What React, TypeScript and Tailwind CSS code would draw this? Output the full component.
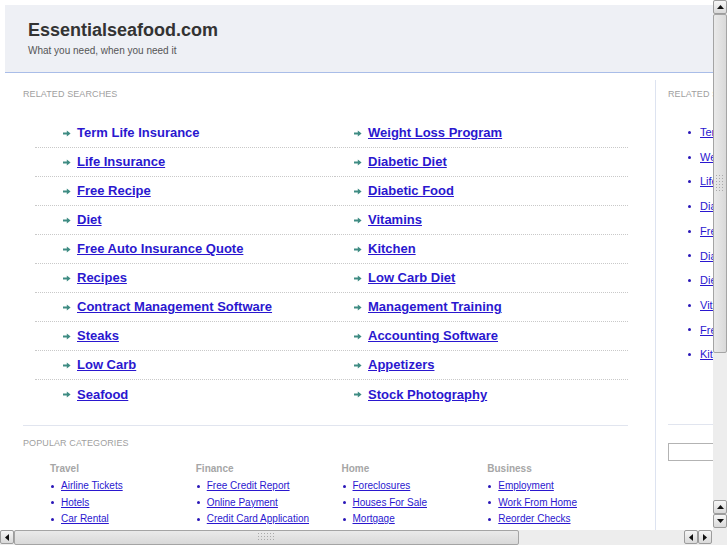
import React from 'react';

const leftKeywords = [
  'Term Life Insurance',
  'Life Insurance',
  'Free Recipe',
  'Diet',
  'Free Auto Insurance Quote',
  'Recipes',
  'Contract Management Software',
  'Steaks',
  'Low Carb',
  'Seafood',
];

const rightKeywords = [
  'Weight Loss Program',
  'Diabetic Diet',
  'Diabetic Food',
  'Vitamins',
  'Kitchen',
  'Low Carb Diet',
  'Management Training',
  'Accounting Software',
  'Appetizers',
  'Stock Photography',
];

const sideLinks = [
  'Term Life Insurance',
  'Weight Loss Program',
  'Life Insurance',
  'Diabetic Diet',
  'Free Recipe',
  'Diabetic Food',
  'Diet',
  'Vitamins',
  'Free Auto Insurance Quote',
  'Kitchen',
];

const categories = [
  { title: 'Travel', links: ['Airline Tickets', 'Hotels', 'Car Rental'] },
  { title: 'Finance', links: ['Free Credit Report', 'Online Payment', 'Credit Card Application'] },
  { title: 'Home', links: ['Foreclosures', 'Houses For Sale', 'Mortgage'] },
  { title: 'Business', links: ['Employment', 'Work From Home', 'Reorder Checks'] },
];

function Arrow() {
  return (
    <svg width="8" height="7" viewBox="0 0 8 7" className="shrink-0">
      <path d="M0 2.6H3.8V0.4L7.6 3.5L3.8 6.6V4.4H0Z" fill="#3f8c83" />
    </svg>
  );
}

function KeywordColumn({ items, className, pad }: { items: string[]; className: string; pad: string }) {
  return (
    <ul className={className}>
      {items.map((k, i) => (
        <li
          key={k}
          className={
            'h-[29px] flex items-center gap-[6px] border-b border-dotted border-[#c9c9c9] last:border-b-0 ' + pad
          }
        >
          <Arrow />
          <a
            href="#"
            className={
              'text-[13px] font-bold text-[#2a17cf] ' + (i === 0 && items === leftKeywords ? '' : 'underline')
            }
          >
            {k}
          </a>
        </li>
      ))}
    </ul>
  );
}

function StepButton({ dir }: { dir: 'up' | 'down' | 'left' | 'right' }) {
  const pts = {
    up: '0,5 3.5,1 7,5',
    down: '0,1 3.5,5 7,1',
    left: '5,0 1,3.5 5,7',
    right: '1,0 5,3.5 1,7',
  }[dir];
  const vertical = dir === 'up' || dir === 'down';
  return (
    <div className="w-[14px] h-[14px] flex items-center justify-center rounded-[2px] border border-[#9c9c9c] bg-gradient-to-b from-[#f6f6f6] to-[#d9d9d9]">
      <svg width={vertical ? 7 : 6} height={vertical ? 6 : 7}>
        <polygon points={pts} fill="#111" />
      </svg>
    </div>
  );
}

function Grip({ vertical }: { vertical: boolean }) {
  const cols = vertical ? 3 : 6;
  const rows = vertical ? 6 : 3;
  const dots = [];
  for (let r = 0; r < rows; r++)
    for (let c = 0; c < cols; c++) dots.push(<rect key={r + '-' + c} x={c * 3} y={r * 3} width="1" height="1" fill="#a9a9a9" />);
  return (
    <svg width={cols * 3} height={rows * 3}>
      {dots}
    </svg>
  );
}

function VScroll() {
  return (
    <div className="w-[14px] h-full flex flex-col bg-[#ededed]">
      <StepButton dir="up" />
      <div className="h-[339px] flex items-center justify-center rounded-[2px] border border-[#a4a4a4] bg-gradient-to-r from-[#eaeaea] to-[#d9d9d9]">
        <Grip vertical />
      </div>
      <div className="flex-1" />
      <StepButton dir="up" />
      <StepButton dir="down" />
      <div className="h-[2px]" />
    </div>
  );
}

function HScroll() {
  return (
    <div className="flex h-[15px] bg-[#ededed]">
      <div className="w-[713px] flex items-stretch">
        <StepButton dir="left" />
        <div className="w-[505px] flex items-center justify-center rounded-[2px] border border-[#a4a4a4] bg-gradient-to-b from-[#eaeaea] to-[#d9d9d9]">
          <Grip vertical={false} />
        </div>
        <div className="flex-1" />
        <StepButton dir="left" />
        <StepButton dir="right" />
        <div className="w-[1px]" />
      </div>
      <div className="w-[14px]" />
    </div>
  );
}

function Page() {
  return (
    <div className="w-[960px] pt-[5px] pl-[5px] bg-white text-[#333]">
      <div className="h-[68px] bg-[#eef0f5] border-b border-[#a9bde8] pl-[23px] pt-[16px]">
        <h1 className="text-[18px] leading-[18px] font-bold text-[#333]">Essentialseafood.com</h1>
        <p className="mt-[7px] text-[10px] leading-[10px] text-[#555]">What you need, when you need it</p>
      </div>

      <div className="flex mt-[7px]">
        <div className="w-[651px] min-h-[470px] border-r border-[#dde3f0] pl-[18px] pt-[10px]">
          <h2 className="text-[9px] leading-[9px] tracking-[0.1px] text-[#a0a0a0]">RELATED SEARCHES</h2>
          <div className="mt-[20px] ml-[12px] w-[593px] flex">
            <KeywordColumn items={leftKeywords} className="w-[300px]" pad="pl-[28px]" />
            <KeywordColumn items={rightKeywords} className="flex-1" pad="pl-[19px]" />
          </div>
          <div className="mt-[16px] w-[605px] border-t border-[#e1e5ef]" />
          <h2 className="mt-[13px] text-[9px] leading-[9px] tracking-[0.1px] text-[#a0a0a0]">POPULAR CATEGORIES</h2>
          <div className="mt-[16px] pl-[27px] w-[610px] grid grid-cols-4">
            {categories.map((c) => (
              <div key={c.title}>
                <h3 className="text-[10px] leading-[10px] font-bold text-[#a6a6a6]">{c.title}</h3>
                <ul className="mt-[4px]">
                  {c.links.map((l) => (
                    <li key={l} className="flex items-center gap-[7px] pl-[1px] leading-[16.5px]">
                      <span className="w-[3px] h-[3px] rounded-full bg-[#2a17b8]" />
                      <a href="#" className="text-[10px] text-[#2a17cf] underline">
                        {l}
                      </a>
                    </li>
                  ))}
                </ul>
              </div>
            ))}
          </div>
        </div>

        <div className="w-[240px] pl-[12px] pt-[10px]">
          <h2 className="text-[9px] leading-[9px] tracking-[0.1px] text-[#a0a0a0]">RELATED SEARCHES</h2>
          <ul className="mt-[21px] pl-[20px]">
            {sideLinks.map((l) => (
              <li key={l} className="flex items-center gap-[9px] leading-[24.7px]">
                <span className="w-[3px] h-[3px] rounded-full bg-[#2a17b8]" />
                <a href="#" className="text-[11px] text-[#2a17cf] underline whitespace-nowrap">
                  {l}
                </a>
              </li>
            ))}
          </ul>
          <div className="mt-[57px] border-t border-[#e1e5ef]" />
          <input className="mt-[18px] w-[170px] h-[18px] border border-[#b3b3b3] bg-white" />
        </div>
      </div>
    </div>
  );
}

export default function App() {
  return (
    <div className="w-[727px] h-[545px] overflow-hidden flex flex-col bg-white font-['Liberation_Sans',Arial,sans-serif]">
      <div className="flex h-[530px]">
        <div className="w-[713px] h-full overflow-hidden">
          <Page />
        </div>
        <VScroll />
      </div>
      <HScroll />
    </div>
  );
}
